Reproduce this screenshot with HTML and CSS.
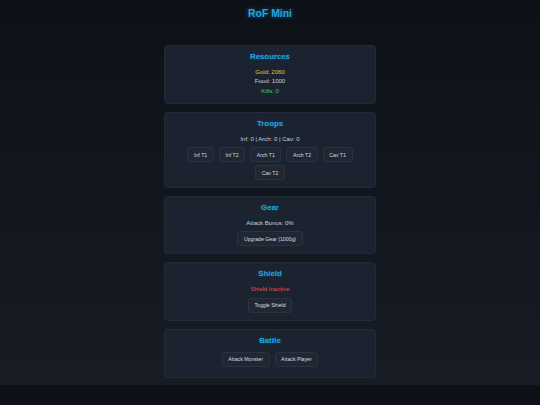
FILE: index.html
```html
<!DOCTYPE html>
<html lang="en">
<head>
<meta charset="utf-8">
<title>RoF Mini</title>
<link rel="stylesheet" href="styles.css">
</head>
<body>
<h1 class="title">RoF Mini</h1>
<main class="cards">
  <section class="card">
    <h2 class="card-title">Resources</h2>
    <p class="line gold">Gold: 2060</p>
    <p class="line">Food: 1000</p>
    <p class="line kills">Kills: 0</p>
  </section>
  <section class="card">
    <h2 class="card-title">Troops</h2>
    <p class="line">Inf: 0 | Arch: 0 | Cav: 0</p>
    <div class="btn-row">
      <button class="btn">Inf T1</button>
      <button class="btn">Inf T2</button>
      <button class="btn">Arch T1</button>
      <button class="btn">Arch T2</button>
      <button class="btn">Cav T1</button>
      <button class="btn">Cav T2</button>
    </div>
  </section>
  <section class="card">
    <h2 class="card-title">Gear</h2>
    <p class="line">Attack Bonus: 0%</p>
    <div class="btn-row">
      <button class="btn">Upgrade Gear (1000g)</button>
    </div>
  </section>
  <section class="card">
    <h2 class="card-title">Shield</h2>
    <p class="line inactive">Shield Inactive</p>
    <div class="btn-row">
      <button class="btn">Toggle Shield</button>
    </div>
  </section>
  <section class="card">
    <h2 class="card-title">Battle</h2>
    <div class="btn-row battle-row">
      <button class="btn">Attack Monster</button>
      <button class="btn">Attack Player</button>
    </div>
  </section>
</main>
</body>
</html>
```
FILE: styles.css
```css
body {
  margin: 0;
  padding: 8px 0 7px;
  font-family: "Liberation Sans", Arial, sans-serif;
  color: #c9d1d9;
  background: linear-gradient(#0d1117, #171c25);
}
.title {
  margin: 0 0 25px;
  font-size: 10.4px;
  line-height: 12px;
  font-weight: bold;
  text-align: center;
  color: #1fa6e0;
  text-shadow: 0 0 4px rgba(31, 166, 224, 0.6);
}
.cards {
  display: flex;
  flex-direction: column;
  align-items: center;
  gap: 8px;
}
.card {
  width: 212px;
  box-sizing: border-box;
  padding: 6px 10px 7px;
  background: #1c2330;
  border: 1px solid #232b38;
  border-radius: 4px;
  text-align: center;
}
.card-title {
  margin: 0 0 7px;
  font-size: 7.8px;
  line-height: 9px;
  font-weight: bold;
  color: #1fa6e0;
  text-shadow: 0 0 3px rgba(31, 166, 224, 0.35);
}
.line {
  margin: 0;
  font-size: 6px;
  line-height: 9.3px;
}
.gold { color: #e6c43a; }
.kills { color: #3fd16a; }
.inactive { color: #e04f4f; }
.btn-row {
  display: flex;
  flex-wrap: wrap;
  justify-content: center;
  gap: 3px 5px;
  margin-top: 3px;
}
.battle-row {
  margin-top: 2px;
  margin-bottom: 3.4px;
}
.btn {
  font-family: "Liberation Sans", Arial, sans-serif;
  font-size: 5.2px;
  line-height: 6px;
  padding: 3.5px 5.6px;
  color: #d5dbe2;
  background: #202733;
  border: 1px solid #2b3341;
  border-radius: 3px;
}
```
